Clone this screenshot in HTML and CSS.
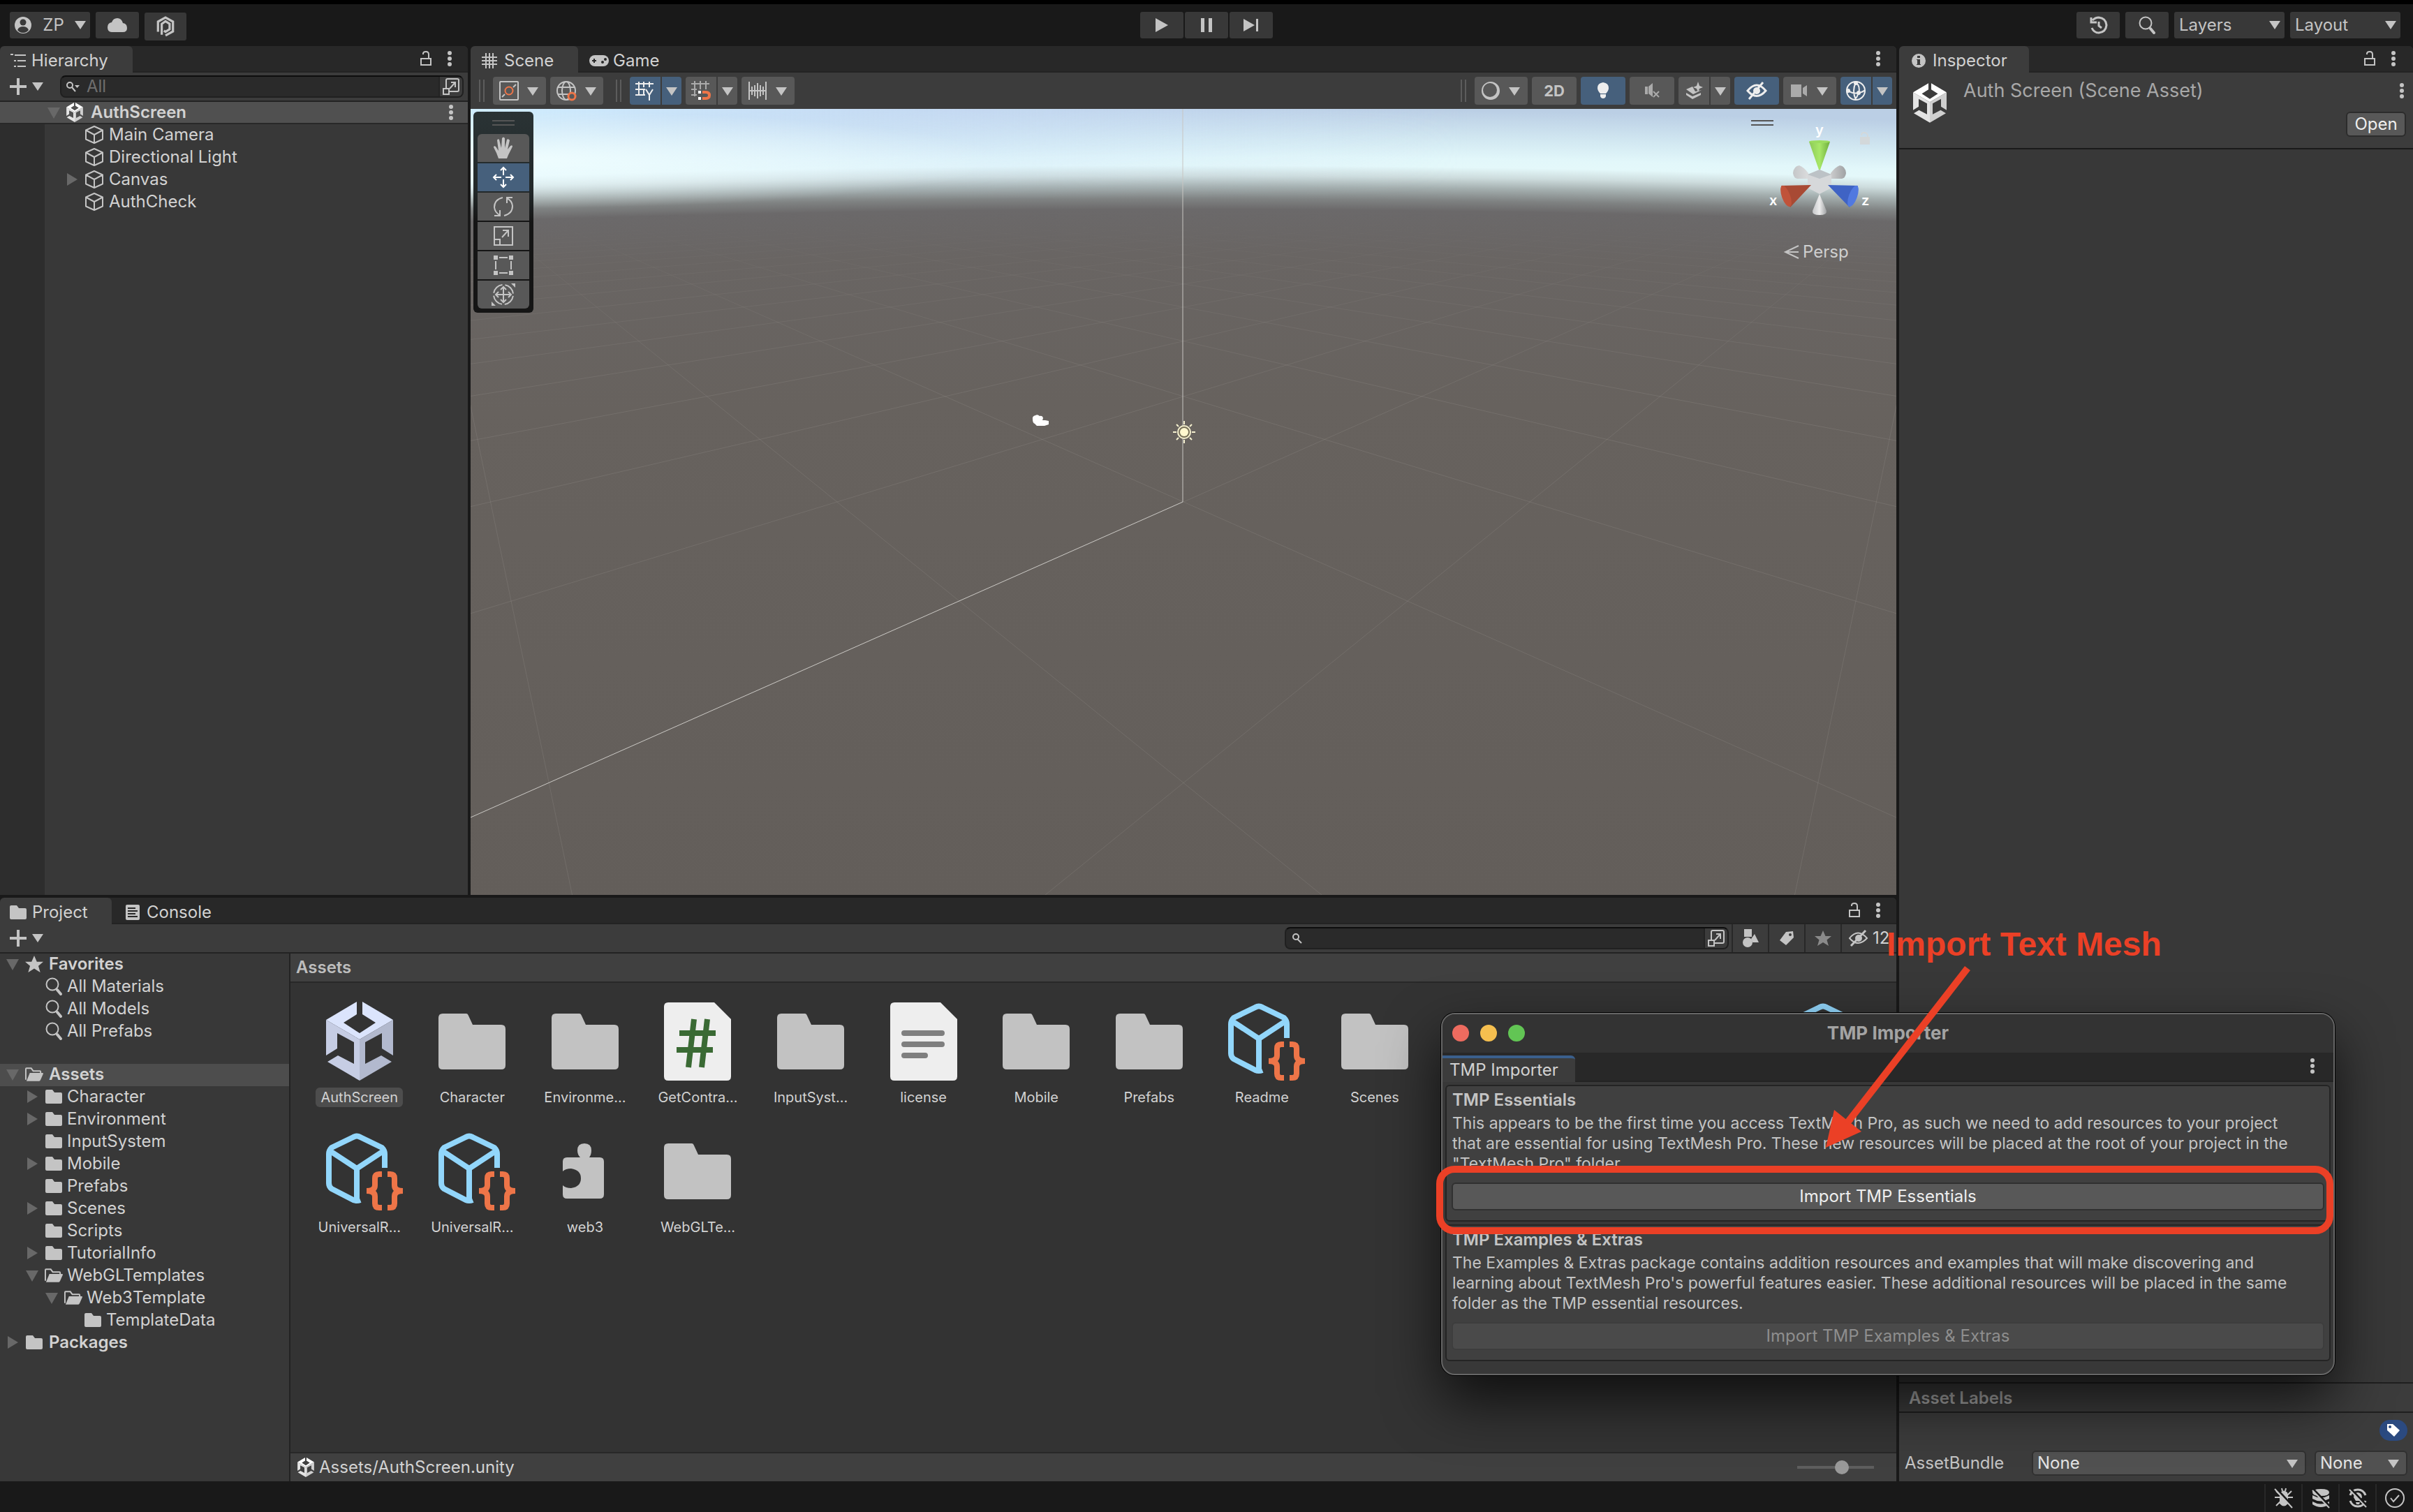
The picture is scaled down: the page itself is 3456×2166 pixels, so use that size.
FILE: index.html
```html
<!DOCTYPE html>
<html lang="en">
<head>
<meta charset="utf-8">
<title>AuthScreen - Unity Editor</title>
<link rel="stylesheet" href="styles.css">
</head>
<body>
<svg class="sprite" aria-hidden="true">
  <symbol id="i-down" viewBox="0 0 16 14"><path d="M0 1h16L8 13z" fill="currentColor"/></symbol>
  <symbol id="i-open" viewBox="0 0 24 24"><path d="M3 5h18L12 21z" fill="#686868"/></symbol>
  <symbol id="i-closed" viewBox="0 0 24 24"><path d="M5 3v18l15-9z" fill="#686868"/></symbol>
  <symbol id="i-dots" viewBox="0 0 8 24"><g fill="currentColor"><circle cx="4" cy="4" r="3"/><circle cx="4" cy="12" r="3"/><circle cx="4" cy="20" r="3"/></g></symbol>
  <symbol id="i-lock" viewBox="0 0 20 24"><path d="M3 12h14v9H3zM6 6V5q0-3 4-3t4 4v6" fill="none" stroke="currentColor" stroke-width="2"/></symbol>
  <symbol id="i-plus" viewBox="0 0 24 24"><path d="M10 0h4v10h10v4H14v10h-4V14H0v-4h10z" fill="currentColor"/></symbol>
  <symbol id="i-search" viewBox="0 0 26 26"><circle cx="11" cy="10" r="8.500" fill="none" stroke="currentColor" stroke-width="2"/><path d="M18 18l5 6" stroke="currentColor" stroke-width="4" stroke-linecap="round"/></symbol>
  <symbol id="i-searchmini" viewBox="0 0 20 16"><circle cx="5" cy="6" r="4" fill="none" stroke="currentColor" stroke-width="2"/><path d="M8 9l5 6" stroke="currentColor" stroke-width="2"/><path d="M12 6h7l-3.500 4z" fill="currentColor"/></symbol>
  <symbol id="i-searchplain" viewBox="0 0 20 16"><circle cx="7" cy="6" r="4" fill="none" stroke="currentColor" stroke-width="2"/><path d="M9 9l6 6" stroke="currentColor" stroke-width="2"/></symbol>
  <symbol id="i-popout" viewBox="0 0 26 26"><g fill="none" stroke="currentColor" stroke-width="2"><path d="M6 15V4q0-2 2-2h14q2 0 2 2v14q0 2-2 2H11M2 16h8v8H2zM11 16l8-9M13 7h6v7"/></g></symbol>
  <symbol id="i-unity" viewBox="0 0 96 113"><path d="M44 0 0 26l48 28 48-28L52 0v18l19 12-23 15-23-15 19-12z" fill="var(--ua)"/><path d="M0 26v51l16-10V45l24 13v31L17 77 2 86l46 27V54z" fill="var(--ub)"/><path d="M96 26v51L80 67V45L56 58v31l23-12 15 9-46 27V54z" fill="var(--uc)"/></symbol>
  <symbol id="i-cube" viewBox="0 0 28 28"><path d="M14 2l12 5.500v13L14 26 2 20.500v-13zM2 7.500 14 14l12-6.500M14 14v12" fill="none" stroke="currentColor" stroke-width="2" stroke-linejoin="round"/></symbol>
  <symbol id="i-folder" viewBox="0 0 24 20"><path d="M2 0h8l3 4h9q2 0 2 2v12q0 2-2 2H2q-2 0-2-2V2q0-2 2-2z" fill="currentColor"/></symbol>
  <symbol id="i-folderopen" viewBox="0 0 27 20"><path d="M1 18V2q0-1 1-1h7l3 4h10q1 0 1 1v3" fill="none" stroke="currentColor" stroke-width="2"/><path d="M7 8h19q1 0 1 1l-4 9q-1 2-2 2H2z" fill="currentColor"/></symbol>
  <symbol id="i-star" viewBox="0 0 24 22"><path d="M12 0l3.500 8H24l-6.500 5.500L20 22l-8-5-8 5 2.500-8.500L0 8h8.500z" fill="currentColor"/></symbol>
  <symbol id="i-pop" viewBox="0 0 26 28"><g fill="none" stroke="currentColor" stroke-width="3"><path d="M8 25V10.500l5-3.500 5.500 3.500v7L13 21l-2-1.500"/><path d="M3 21V7.500L13 2l10 5.500v13L13 26"/></g></symbol>
  <symbol id="b-folder" viewBox="0 0 128 128"><path d="M22 24h34q2 0 3 3l6 13h41q6 0 6 6v52q0 6-6 6H22q-6 0-6-6V30q0-6 6-6z" fill="#c2c2c2"/></symbol>
  <symbol id="b-unity" viewBox="0 0 128 128"><use href="#i-unity" x="16" y="7" width="96" height="113"/></symbol>
  <symbol id="b-script" viewBox="0 0 128 128"><path d="M22 8h66l24 24v82q0 6-6 6H22q-6 0-6-6V14q0-6 6-6z" fill="#eee"/><path d="M59 32l-8 69M78 32l-8 69M38 52h52M34 76h52" fill="none" stroke="#3a6a34" stroke-width="8"/></symbol>
  <symbol id="b-text" viewBox="0 0 128 128"><path d="M22 8h66l24 24v82q0 6-6 6H22q-6 0-6-6V14q0-6 6-6z" fill="#eee"/><path d="M36 52h54M36 68h54M36 84h30" stroke="#7f7f7f" stroke-width="8" stroke-linecap="round"/></symbol>
  <symbol id="b-object" viewBox="0 0 128 128"><path d="M100 59V39q0-5-4-9L65 15q-5-3-10 0L24 30q-4 4-4 9v42q0 5 4 8l31 16q5 2 10 0M22 35l38 25 38-25M60 60v46" fill="none" stroke="#92d6fb" stroke-width="8" stroke-linejoin="round"/><path d="M96 68h-4q-6 0-6 6v10q0 8-12 8q12 0 12 8v10q0 6 6 6h4M104 68h4q6 0 6 6v10q0 8 12 8q-12 0-12 8v10q0 6-6 6h-4" fill="none" stroke="#ee7548" stroke-width="8"/></symbol>
  <symbol id="b-puzzle" viewBox="0 0 128 128"><path d="M38 44h19q-4-4-4-10 0-10 10-10t10 10q0 6-3 10h15q6 0 6 6v47q0 6-6 6H38q-6 0-6-6V84q4 4 12 4 14-2 14-14T44 60q-8 0-12 4V50q0-6 6-6z" fill="#c2c2c2"/></symbol>
</svg>

<header class="topbar">
  <div class="topbar-group">
    <button class="tbtn account"><svg width="26" height="26" viewBox="0 0 26 26"><circle cx="13" cy="13" r="12" fill="currentColor"/><circle cx="13" cy="9" r="4.500" fill="#383838"/><path d="M5 20q2-5 8-5t8 5q-3 4-8 4t-8-4z" fill="#383838"/></svg><span>ZP</span><svg class="arrow"><use href="#i-down"/></svg></button>
    <button class="tbtn" aria-label="Cloud"><svg width="30" height="22" viewBox="0 0 30 22"><path d="M7 21q-6 0-6-7 0-6 6-7Q9 1 15 1t8 7q6 1 6 7t-6 6z" fill="currentColor"/></svg></button>
    <button class="tbtn plug" aria-label="Package"><svg width="28" height="30"><use href="#i-pop"/></svg></button>
  </div>
  <div class="playbar">
    <button class="tbtn" aria-label="Play"><svg width="20" height="22" viewBox="0 0 20 22"><path d="M1 1l18 10L1 21z" fill="currentColor"/></svg></button>
    <button class="tbtn" aria-label="Pause"><svg width="18" height="20" viewBox="0 0 18 20"><path d="M1 0h5v20H1zM12 0h5v20h-5z" fill="currentColor"/></svg></button>
    <button class="tbtn" aria-label="Step"><svg width="24" height="20" viewBox="0 0 24 20"><path d="M1 1l16 9-16 9zM19 1h3v18h-3z" fill="currentColor"/></svg></button>
  </div>
  <div class="topbar-group end">
    <button class="tbtn" aria-label="History"><svg width="26" height="26" viewBox="0 0 26 26"><path d="M5 6q4-4 9-4 10 1 11 11-1 10-11 11-7 0-10-7M3 2v7h8M14 8v6l4 3" fill="none" stroke="currentColor" stroke-width="3"/></svg></button>
    <button class="tbtn" aria-label="Search"><svg width="26" height="26"><use href="#i-search"/></svg></button>
    <label class="pick"><select aria-label="Layers"><option>Layers</option></select><svg class="arrow"><use href="#i-down"/></svg></label>
    <label class="pick"><select aria-label="Layout"><option>Layout</option></select><svg class="arrow"><use href="#i-down"/></svg></label>
  </div>
</header>

<main class="workspace">
  <div class="docks">
    <div class="upper">
      <section class="panel hierarchy">
        <div class="tabs">
          <button class="tab on hier-tab"><svg width="22" height="22" viewBox="0 0 22 22"><g fill="none" stroke="currentColor" stroke-width="2"><path d="M0 2h4M6 3h16M5 11h3M10 11h12M5 19h3M10 19h12"/></g></svg>Hierarchy</button>
          <span class="tab-tools"><svg width="20" height="24"><use href="#i-lock"/></svg><svg width="8" height="24"><use href="#i-dots"/></svg></span>
        </div>
        <div class="bar">
          <button class="add" aria-label="Create"><svg width="24" height="24"><use href="#i-plus"/></svg><svg class="arrow"><use href="#i-down"/></svg></button>
          <label class="search"><svg width="20" height="16"><use href="#i-searchmini"/></svg><input type="text" placeholder="All" aria-label="Search hierarchy"><span class="pop"><svg width="26" height="26"><use href="#i-popout"/></svg></span></label>
        </div>
        <div class="scene-row"><svg class="fold"><use href="#i-open"/></svg><svg class="ic mono" width="24" height="28"><use href="#i-unity"/></svg><b>AuthScreen</b><svg class="row-dots" width="8" height="24"><use href="#i-dots"/></svg></div>
        <ul class="objects">
          <li><span class="fold"></span><svg width="28" height="28"><use href="#i-cube"/></svg>Main Camera</li>
          <li><span class="fold"></span><svg width="28" height="28"><use href="#i-cube"/></svg>Directional Light</li>
          <li><svg class="fold"><use href="#i-closed"/></svg><svg width="28" height="28"><use href="#i-cube"/></svg>Canvas</li>
          <li><span class="fold"></span><svg width="28" height="28"><use href="#i-cube"/></svg>AuthCheck</li>
        </ul>
      </section>

      <section class="panel scene">
        <div class="tabs">
          <button class="tab on scene-tab"><svg width="22" height="22" viewBox="0 0 22 22"><path d="M6 0v22M11 0v22M16 0v22M0 6h22M0 11h22M0 16h22" stroke="currentColor" stroke-width="2"/></svg>Scene</button>
          <button class="tab game-tab"><svg width="28" height="16" viewBox="0 0 28 16"><rect width="28" height="16" rx="8" fill="currentColor"/><path d="M4 8h6M7 5v6" stroke="#282828" stroke-width="2"/><circle cx="19" cy="10" r="2" fill="#282828"/><circle cx="23" cy="6" r="2" fill="#282828"/></svg>Game</button>
          <span class="tab-tools"><svg width="8" height="24"><use href="#i-dots"/></svg></span>
        </div>
        <div class="scene-bar">
          <i class="grip"></i>
          <button class="sb wide" aria-label="Pivot"><svg width="28" height="28" viewBox="0 0 28 28"><rect x="1" y="1" width="26" height="26" rx="1" fill="none" stroke="currentColor" stroke-width="2"/><path d="M4 23l4-4M20 9l4-4" stroke="currentColor" stroke-width="2"/><circle cx="14" cy="14" r="5.500" fill="none" stroke="#ee7548" stroke-width="2"/></svg><svg class="arrow"><use href="#i-down"/></svg></button>
          <button class="sb wide" aria-label="Global"><svg width="30" height="30" viewBox="0 0 30 30"><g fill="none" stroke="currentColor" stroke-width="2"><circle cx="15" cy="15" r="13"/><ellipse cx="15" cy="15" rx="6" ry="13"/><path d="M3 10h24M3 20h24"/></g><circle cx="23" cy="23" r="5" fill="#585858" stroke="#ee7548" stroke-width="3"/></svg><svg class="arrow"><use href="#i-down"/></svg></button>
          <i class="grip second"></i>
          <span class="split"><button class="sb blue" aria-label="Grid axis"><svg width="28" height="28" viewBox="0 0 28 28"><path d="M5 1v20M12 1v8M12 12v9M20 1v8M0 4h26M0 12h14M0 20h14M15 12l5 8 5-8M20 20v8" fill="none" stroke="currentColor" stroke-width="2"/></svg></button><button class="sb blue thin" aria-label="Grid options"><svg class="arrow"><use href="#i-down"/></svg></button></span>
          <span class="split"><button class="sb" aria-label="Snap"><svg width="28" height="28" viewBox="0 0 28 28"><path d="M5 0v22M13 0v12M21 0v12M0 4h26M0 12h8M0 20h8" fill="none" stroke="#aaa" stroke-width="2"/><path d="M16 16h5q5 0 5 4.500T21 25h-5" fill="none" stroke="#ee7548" stroke-width="4"/><path d="M10 14h4v4h-4zM10 23h4v4h-4z" fill="#fff"/></svg></button><button class="sb thin" aria-label="Snap options"><svg class="arrow"><use href="#i-down"/></svg></button></span>
          <button class="sb wide" aria-label="Increment"><svg width="28" height="28" viewBox="0 0 28 28"><path d="M2 1v26M26 1v26M6 8v12M10 6v16M14 3v22M18 6v16M22 8v12M2 14h24" stroke="currentColor" stroke-width="2"/></svg><svg class="arrow"><use href="#i-down"/></svg></button>
          <span class="spring"></span>
          <i class="grip"></i>
          <button class="sb wide" aria-label="Draw mode"><svg width="28" height="28" viewBox="0 0 28 28"><path d="M14 1a13 13 0 1 1 0 26a13 13 0 1 1 0-26zm-1 2a10 10 0 1 0 0 20a10 10 0 1 0 0-20z" fill="currentColor" fill-rule="evenodd"/></svg><svg class="arrow"><use href="#i-down"/></svg></button>
          <button class="sb mid twod">2D</button>
          <button class="sb mid blue" aria-label="Lighting"><svg width="18" height="26" viewBox="0 0 18 26"><path d="M9 1q8 1 8 8 0 4-4 8H5q-4-4-4-8 0-7 8-8zM5 18h8v3q-1 3-4 3t-4-3z" fill="currentColor"/></svg></button>
          <button class="sb mid" aria-label="Audio"><svg width="24" height="24" viewBox="0 0 24 24"><path d="M2 6h4v11H2zM7 6l6-5v20l-6-5z" fill="#aaa"/><path d="M14 13l8 8M22 13l-8 8" stroke="#aaa" stroke-width="2"/></svg></button>
          <span class="split"><button class="sb" aria-label="Effects"><svg width="28" height="28" viewBox="0 0 28 28"><path d="M20 1l2 6 5 2-5 2-2 5-2-5-5-2 5-2zM3 12l9-4 4 7 9-2-12 6zM3 17l9 5 12-5v3l-12 6-9-6z" fill="currentColor"/></svg></button><button class="sb thin" aria-label="Effects options"><svg class="arrow"><use href="#i-down"/></svg></button></span>
          <button class="sb mid blue" aria-label="Hidden objects"><svg width="30" height="26" viewBox="0 0 30 26"><path d="M2 13q13-16 26 0-13 15-26 0z" fill="none" stroke="currentColor" stroke-width="3"/><circle cx="15" cy="13" r="5" fill="currentColor"/><path d="M4 25L24 1" stroke="currentColor" stroke-width="3"/></svg></button>
          <button class="sb wide" aria-label="Camera"><svg width="26" height="20" viewBox="0 0 26 20"><path d="M1 1h15v18H1zM18 6l6-4v16l-6-4z" fill="#aaa"/></svg><svg class="arrow"><use href="#i-down"/></svg></button>
          <span class="split"><button class="sb blue" aria-label="Gizmos"><svg width="30" height="30" viewBox="0 0 30 30"><g fill="none" stroke="currentColor" stroke-width="2"><circle cx="15" cy="15" r="13"/><path d="M15 3q-6 12 0 25M15 3q7 6 4 15-2 6-5 9M3 14q7 6 16 4 6-1 9-4"/></g><g fill="currentColor"><circle cx="15" cy="4" r="3"/><circle cx="4" cy="15" r="3"/><circle cx="19" cy="18" r="3"/></g></svg></button><button class="sb blue thin" aria-label="Gizmo options"><svg class="arrow"><use href="#i-down"/></svg></button></span>
        </div>
        <div class="viewport">
          <svg class="world" viewBox="0 0 2042 1126" preserveAspectRatio="none">
            <defs>
              <radialGradient id="sky" gradientUnits="userSpaceOnUse" cx="1021" cy="30000" r="30000">
                <stop offset="0.9620" stop-color="#635e5a"/>
                <stop offset="0.9860" stop-color="#67625e"/>
                <stop offset="0.9930" stop-color="#696563"/>
                <stop offset="0.9952" stop-color="#6b696a"/>
                <stop offset="0.9957" stop-color="#7f8282"/>
                <stop offset="0.9963" stop-color="#a5b0b0"/>
                <stop offset="0.9968" stop-color="#cddcdd"/>
                <stop offset="0.9973" stop-color="#e4f8fa"/>
                <stop offset="0.9977" stop-color="#e2f7fa"/>
                <stop offset="0.9986" stop-color="#d3e9f2"/>
                <stop offset="1" stop-color="#bbcfe5"/>
              </radialGradient>
              <radialGradient id="glow" gradientUnits="userSpaceOnUse" cx="60" cy="65" r="700" gradientTransform="matrix(1 0 0 .1 0 66)">
                <stop offset="0" stop-color="#f2ffff" stop-opacity=".9"/><stop offset="1" stop-color="#f2ffff" stop-opacity="0"/>
              </radialGradient>
              <linearGradient id="tint" x1="0" x2="1"><stop offset="0" stop-color="#d0eeff"/><stop offset=".35" stop-color="#cbe0fa" stop-opacity=".6"/><stop offset=".7" stop-color="#cbe0fa" stop-opacity="0"/></linearGradient>
              <linearGradient id="fadev" x1="0" x2="0" y1="0" y2="1"><stop offset="0" stop-color="#fff"/><stop offset="1" stop-color="#000"/></linearGradient>
              <mask id="fade"><rect width="2042" height="130" fill="url(#fadev)"/></mask>
              <linearGradient id="haze" gradientUnits="userSpaceOnUse" x1="0" x2="0" y1="150" y2="420"><stop offset="0" stop-color="#000"/><stop offset=".4" stop-color="#888"/><stop offset="1" stop-color="#fff"/></linearGradient>
              <mask id="gridfade" maskUnits="userSpaceOnUse" x="0" y="0" width="2042" height="1126"><rect width="2042" height="1126" fill="url(#haze)"/></mask>
            </defs>
            <rect width="2042" height="1126" fill="url(#sky)"/>
            <rect width="2042" height="130" fill="url(#tint)" mask="url(#fade)"/>
            <rect width="900" height="150" fill="url(#glow)"/>
            <g mask="url(#gridfade)"><g id="grid"></g></g>
            <g fill="none" stroke="#c8c6c2" stroke-width="1"><path d="M1020 0v563L0 1015"/></g>
          </svg>
          <svg class="camera-mark" width="26" height="20" viewBox="0 0 26 20"><path d="M2 8q-1-5 4-6 3-2 6 1 4-1 5 3l-1 3h4l5 1v5l-6 2H8l-3-3q-3-1-3-6z" fill="#fff"/></svg>
          <svg class="sun-mark" width="34" height="34" viewBox="0 0 34 34"><g stroke="#f5f0cf" stroke-width="2"><path d="M17 1v5M17 28v5M1 17h5M28 17h5M6 6l3 3M25 25l3 3M6 28l3-3M25 9l3-3"/><circle cx="17" cy="17" r="9" fill="#777058"/></g><circle cx="17" cy="17" r="6" fill="#fff8cf"/></svg>
          <div class="tools">
            <i class="hgrip"></i>
            <button aria-label="View tool"><svg width="30" height="32" viewBox="0 0 30 32"><path d="M8 31L5 23 1 15q0-3 3-1l4 6L6 5q1-3 3-1l3 12 1-14q2-3 4 0l0 14 3-12q2-2 4 1l-3 13 4-5q3-2 3 1l-6 12-2 5z" fill="currentColor"/></svg></button>
            <button class="blue" aria-label="Move tool"><svg width="32" height="32" viewBox="0 0 32 32"><path d="M16 2v11M16 19v11M2 16h11M19 16h11M12 6l4-4 4 4M12 26l4 4 4-4M6 12l-4 4 4 4M26 12l4 4-4 4" fill="none" stroke="#fff" stroke-width="2"/></svg></button>
            <button aria-label="Rotate tool"><svg width="32" height="32" viewBox="0 0 32 32"><path d="M15 3Q3 6 3 17q1 8 8 11M3 29h8v-8M17 29q12-3 12-14-1-8-8-11M29 3h-8v8" fill="none" stroke="currentColor" stroke-width="2"/></svg></button>
            <button aria-label="Scale tool"><svg width="32" height="32" viewBox="0 0 32 32"><path d="M3 3h26v26H3zM3 21h8v8M14 18l9-10M15 8h8v9" fill="none" stroke="currentColor" stroke-width="2"/></svg></button>
            <button aria-label="Rect tool"><svg width="32" height="32" viewBox="0 0 32 32"><path d="M10 5h12M10 27h12M5 10v12M27 10v12" stroke="currentColor" stroke-width="2"/><path d="M2 2h6v6H2zM24 2h6v6h-6zM2 24h6v6H2zM24 24h6v6h-6z" fill="currentColor"/></svg></button>
            <button aria-label="Transform tool"><svg width="34" height="32" viewBox="0 0 34 32"><path d="M17 5v22M6 16h22M13 9l4-4 4 4M13 23l4 4 4-4M10 12l-4 4 4 4M24 12l4 4-4 4" fill="none" stroke="currentColor" stroke-width="2"/><circle cx="17" cy="16" r="14" fill="none" stroke="currentColor" stroke-width="2" stroke-dasharray="18 4" stroke-dashoffset="-2"/><path d="M28 0h6v6zM0 26v6h6z" fill="currentColor"/></svg></button>
          </div>
          <div class="orient">
            <i class="hgrip"></i>
            <svg width="150" height="120" viewBox="0 0 150 120">
              <defs><linearGradient id="gw" x1="0" x2="1"><stop offset="0" stop-color="#c4c6c8"/><stop offset=".5" stop-color="#ececec"/><stop offset="1" stop-color="#9fa1a3"/></linearGradient><linearGradient id="gg" x1="0" x2="1"><stop offset="0" stop-color="#8cc957"/><stop offset=".5" stop-color="#a8e868"/><stop offset="1" stop-color="#6fae3e"/></linearGradient></defs>
              <path d="M57 47q-7-9-13-11-8 1-9 11 1 7 6 8h16zM89 47q7-9 13-11 8 1 9 11-1 7-6 8H89z" fill="url(#gw)"/>
              <path d="M56 49l17-7 17 7v19l-17 9-17-9z" fill="#d6d8da"/><path d="M56 49l17-7 17 7-17 6z" fill="#bcc2c6"/>
              <path d="M58 2h30L74 42h-2z" fill="url(#gg)"/><ellipse cx="73" cy="2" rx="15" ry="2" fill="#9bdc5e"/>
              <path d="M18 65l43-1-30 32z" fill="#a84a34"/><ellipse cx="25" cy="80" rx="6" ry="16" transform="rotate(-20 25 80)" fill="#c0533a"/>
              <path d="M85 64l43 1-12 31z" fill="#3f63c4"/><ellipse cx="121" cy="80" rx="6" ry="16" transform="rotate(20 121 80)" fill="#5179e0"/>
              <path d="M73 77l10 24q1 6-10 6t-10-6z" fill="url(#gw)"/>
              <path d="M131-5h14V6h-14z" fill="#d3d8da"/><path d="M133-7q0-4 4-4t5 4v3" fill="none" stroke="#d3d8da" stroke-width="2"/>
            </svg>
            <span class="ax ay">y</span><span class="ax axx">x</span><span class="ax az">z</span>
            <button class="persp"><svg width="20" height="20" viewBox="0 0 20 20"><path d="M20 1L1 10l19 9M2 10h18" fill="none" stroke="currentColor" stroke-width="2"/></svg>Persp</button>
          </div>
        </div>
      </section>
    </div>

    <section class="panel project">
      <div class="tabs">
        <button class="tab on proj-tab"><svg width="24" height="20"><use href="#i-folder"/></svg>Project</button>
        <button class="tab cons-tab"><svg width="20" height="22" viewBox="0 0 20 22"><rect width="20" height="22" rx="2" fill="currentColor"/><path d="M3 5h11M3 9h14M3 13h11M3 17h14" stroke="#282828" stroke-width="2"/></svg>Console</button>
        <span class="tab-tools"><svg width="20" height="24"><use href="#i-lock"/></svg><svg width="8" height="24"><use href="#i-dots"/></svg></span>
      </div>
      <div class="bar">
        <button class="add" aria-label="Create asset"><svg width="24" height="24"><use href="#i-plus"/></svg><svg class="arrow"><use href="#i-down"/></svg></button>
        <span class="spring"></span>
        <label class="search assets-search"><svg width="20" height="16"><use href="#i-searchplain"/></svg><input type="text" aria-label="Search assets"><span class="pop"><svg width="26" height="26"><use href="#i-popout"/></svg></span></label>
        <button class="pbtn" aria-label="Type filter"><svg width="26" height="28" viewBox="0 0 26 28"><path d="M4 1h11v11H4zM19 8l6 12h-9l-2-5z" fill="currentColor"/><circle cx="9" cy="20" r="7" fill="currentColor"/></svg></button>
        <button class="pbtn" aria-label="Label filter"><svg width="22" height="22" viewBox="0 0 22 22"><path d="M10 2l10-1 1 9-11 11-9-7z" fill="currentColor"/><circle cx="16" cy="6" r="2" fill="#3c3c3c"/></svg></button>
        <button class="pbtn dim" aria-label="Favorite filter"><svg width="24" height="22"><use href="#i-star"/></svg></button>
        <button class="pbtn hid"><svg width="28" height="24" viewBox="0 0 28 24"><path d="M1 12q12-15 25 0-13 14-25 0z" fill="none" stroke="currentColor" stroke-width="2"/><circle cx="14" cy="12" r="5" fill="currentColor"/><path d="M3 23L24 1" stroke="currentColor" stroke-width="3"/></svg>12</button>
      </div>
      <div class="browser">
        <ul class="tree">
          <li class="l0"><svg class="fold"><use href="#i-open"/></svg><svg class="ic" width="26" height="24"><use href="#i-star"/></svg><b>Favorites</b></li>
          <li class="l1"><span class="fold"></span><svg class="ic" width="26" height="26"><use href="#i-search"/></svg>All Materials</li>
          <li class="l1"><span class="fold"></span><svg class="ic" width="26" height="26"><use href="#i-search"/></svg>All Models</li>
          <li class="l1"><span class="fold"></span><svg class="ic" width="26" height="26"><use href="#i-search"/></svg>All Prefabs</li>
          <li class="l0 picked"><svg class="fold"><use href="#i-open"/></svg><svg class="ic" width="26" height="20"><use href="#i-folderopen"/></svg><b>Assets</b></li>
          <li class="l1"><svg class="fold"><use href="#i-closed"/></svg><svg class="ic" width="26" height="20"><use href="#i-folder"/></svg>Character</li>
          <li class="l1"><svg class="fold"><use href="#i-closed"/></svg><svg class="ic" width="26" height="20"><use href="#i-folder"/></svg>Environment</li>
          <li class="l1"><span class="fold"></span><svg class="ic" width="26" height="20"><use href="#i-folder"/></svg>InputSystem</li>
          <li class="l1"><svg class="fold"><use href="#i-closed"/></svg><svg class="ic" width="26" height="20"><use href="#i-folder"/></svg>Mobile</li>
          <li class="l1"><span class="fold"></span><svg class="ic" width="26" height="20"><use href="#i-folder"/></svg>Prefabs</li>
          <li class="l1"><svg class="fold"><use href="#i-closed"/></svg><svg class="ic" width="26" height="20"><use href="#i-folder"/></svg>Scenes</li>
          <li class="l1"><span class="fold"></span><svg class="ic" width="26" height="20"><use href="#i-folder"/></svg>Scripts</li>
          <li class="l1"><svg class="fold"><use href="#i-closed"/></svg><svg class="ic" width="26" height="20"><use href="#i-folder"/></svg>TutorialInfo</li>
          <li class="l1"><svg class="fold"><use href="#i-open"/></svg><svg class="ic" width="26" height="20"><use href="#i-folderopen"/></svg>WebGLTemplates</li>
          <li class="l2"><svg class="fold"><use href="#i-open"/></svg><svg class="ic" width="26" height="20"><use href="#i-folderopen"/></svg>Web3Template</li>
          <li class="l3"><span class="fold"></span><svg class="ic" width="26" height="20"><use href="#i-folder"/></svg>TemplateData</li>
          <li class="l0"><svg class="fold"><use href="#i-closed"/></svg><svg class="ic" width="26" height="20"><use href="#i-folder"/></svg><b>Packages</b></li>
        </ul>
        <div class="content">
          <h2 class="crumb">Assets</h2>
          <ul class="assets">
            <li class="chosen"><svg><use href="#b-unity"/></svg><span>AuthScreen</span></li>
            <li><svg><use href="#b-folder"/></svg><span>Character</span></li>
            <li><svg><use href="#b-folder"/></svg><span>Environme...</span></li>
            <li><svg><use href="#b-script"/></svg><span>GetContra...</span></li>
            <li><svg><use href="#b-folder"/></svg><span>InputSyst...</span></li>
            <li><svg><use href="#b-text"/></svg><span>license</span></li>
            <li><svg><use href="#b-folder"/></svg><span>Mobile</span></li>
            <li><svg><use href="#b-folder"/></svg><span>Prefabs</span></li>
            <li><svg><use href="#b-object"/></svg><span>Readme</span></li>
            <li><svg><use href="#b-folder"/></svg><span>Scenes</span></li>
            <li class="row-end"><svg><use href="#b-object"/></svg></li>
            <li><svg><use href="#b-object"/></svg><span>UniversalR...</span></li>
            <li><svg><use href="#b-object"/></svg><span>UniversalR...</span></li>
            <li><svg><use href="#b-puzzle"/></svg><span>web3</span></li>
            <li><svg><use href="#b-folder"/></svg><span>WebGLTe...</span></li>
          </ul>
          <div class="path"><svg class="mono" width="24" height="28"><use href="#i-unity"/></svg><span>Assets/AuthScreen.unity</span><input type="range" min="0" max="100" value="60" aria-label="Icon size"></div>
        </div>
      </div>
    </section>
  </div>

  <aside class="panel inspector">
    <div class="tabs">
      <button class="tab on insp-tab"><svg width="20" height="20" viewBox="0 0 20 20"><circle cx="10" cy="10" r="10" fill="currentColor"/><path d="M8 3h4v3H8zM7 8h5v7h1v1H7v-1h1V9H7z" fill="#3c3c3c"/></svg>Inspector</button>
      <span class="tab-tools"><svg width="20" height="24"><use href="#i-lock"/></svg><svg width="8" height="24"><use href="#i-dots"/></svg></span>
    </div>
    <div class="insp-head">
      <svg class="mono" width="48" height="57"><use href="#i-unity"/></svg>
      <h1>Auth Screen (Scene Asset)</h1>
      <div class="insp-side"><svg width="8" height="24"><use href="#i-dots"/></svg><button class="open">Open</button></div>
    </div>
    <div class="spring"></div>
    <h2 class="labels">Asset Labels</h2>
    <div class="bundle">
      <button class="tag" aria-label="Edit labels"><svg width="22" height="22" viewBox="0 0 22 22"><path d="M2 2h8l10 9-8 9L2 11z" fill="#fff"/><circle cx="6" cy="6" r="2" fill="#2b4a80"/></svg></button>
      <div class="fields">
        <label for="bundle">AssetBundle</label>
        <span class="drop grow"><select id="bundle"><option>None</option></select><svg class="arrow"><use href="#i-down"/></svg></span>
        <span class="drop variant"><select aria-label="Variant"><option>None</option></select><svg class="arrow"><use href="#i-down"/></svg></span>
      </div>
    </div>
  </aside>
</main>

<footer class="status">
  <span><svg width="28" height="28" viewBox="0 0 28 28"><path d="M9 6q5-5 10 0l1 4v12q-6 7-12 0V10z" fill="currentColor"/><path d="M1 13h26M3 4l6 6M25 4l-6 6M3 25l6-6M25 25l-6-6M11 0l1 4M17 0l-1 4" stroke="currentColor" stroke-width="2"/><path d="M3 0l25 27" stroke="#191919" stroke-width="3"/><path d="M1 1l25 27" stroke="currentColor" stroke-width="2"/></svg></span>
  <span><svg width="28" height="28" viewBox="0 0 28 28"><path d="M2 6q0-5 12-5t12 5-12 5T2 6zM2 10q12 7 24 0v5q-12 7-24 0zM2 19q12 7 24 0v4q-12 8-24 0z" fill="currentColor"/><path d="M4 2l24 25" stroke="#191919" stroke-width="3"/><path d="M2 3l24 25" stroke="currentColor" stroke-width="2"/></svg></span>
  <span><svg width="28" height="28" viewBox="0 0 28 28"><path d="M3 10q3-8 11-8t11 8M3 18q3 8 11 8t11-8" fill="none" stroke="currentColor" stroke-width="3"/><path d="M14 6q6 1 6 7l-3 5h-6l-3-5q0-6 6-7zM11 20h6l-1 3h-4z" fill="currentColor"/><path d="M4 1l24 25" stroke="#191919" stroke-width="3"/><path d="M2 2l24 25" stroke="currentColor" stroke-width="2"/></svg></span>
  <span><svg width="28" height="28" viewBox="0 0 28 28"><circle cx="14" cy="14" r="13" fill="none" stroke="currentColor" stroke-width="2"/><path d="M8 14l4 5 8-9" fill="none" stroke="currentColor" stroke-width="2"/></svg></span>
</footer>

<div class="dialog" role="dialog" aria-label="TMP Importer">
  <div class="dialog-frame">
    <div class="titlebar"><span class="lights"><i class="red"></i><i class="amber"></i><i class="green"></i></span><strong>TMP Importer</strong><span></span></div>
    <div class="dialog-tabs"><button class="dtab">TMP Importer</button><svg width="8" height="24"><use href="#i-dots"/></svg></div>
    <div class="dialog-body">
      <section class="box">
        <h3>TMP Essentials</h3>
        <p>This appears to be the first time you access TextMesh Pro, as such we need to add resources to your project<br>that are essential for using TextMesh Pro. These new resources will be placed at the root of your project in the<br>"TextMesh Pro" folder.</p>
        <button>Import TMP Essentials</button>
      </section>
      <section class="box">
        <h3>TMP Examples &amp; Extras</h3>
        <p>The Examples &amp; Extras package contains addition resources and examples that will make discovering and<br>learning about TextMesh Pro's powerful features easier. These additional resources will be placed in the same<br>folder as the TMP essential resources.</p>
        <button disabled>Import TMP Examples &amp; Extras</button>
      </section>
    </div>
  </div>
  <div class="highlight"></div>
  <div class="note">Import Text Mesh</div>
  <svg class="pointer" width="220" height="270" viewBox="0 0 220 270"><path d="M215 7L40 232" stroke="#eb4026" stroke-width="10"/><path d="M12 264l12-54 39 31z" fill="#eb4026"/></svg>
</div>
<script src="scene.js"></script>
</body>
</html>
```
FILE: styles.css
```css
:root {
  --text: #d2d2d2;
  --icon: #c4c4c4;
  --line: #191919;
}
* { box-sizing: border-box; }
body {
  margin: 0;
  height: 100vh;
  display: flex;
  flex-direction: column;
  position: relative;
  overflow: hidden;
  background: var(--line);
  border-top: 6px solid #000;
  color: var(--text);
  font: 24px/32px Inter, "Liberation Sans", sans-serif;
}
button, input, select { font: inherit; color: inherit; border: 0; margin: 0; padding: 0; background: none; }
select { appearance: none; width: 100%; height: 100%; }
ul { list-style: none; margin: 0; padding: 0; }
h1, h2, h3, p { margin: 0; font-size: 24px; }
b, h2, h3 { font-weight: 600; }
svg { display: block; flex: none; color: var(--icon); overflow: visible; }
.sprite { position: absolute; width: 0; height: 0; overflow: hidden; }
.arrow { width: 16px; height: 14px; }
.spring { flex: 1; }
.fold { width: 24px; height: 24px; flex: none; margin-right: 6px; }
.mono { --ua: #fff; --ub: #e4e4e4; --uc: #cfcfcf; }

/* top bar */
.topbar { display: grid; grid-template-columns: 1fr auto 1fr; padding: 11px 14px; height: 60px; }
.topbar-group { display: flex; gap: 8px; }
.end { justify-content: flex-end; padding-right: 4px; }
.tbtn { display: flex; align-items: center; justify-content: center; width: 62px; height: 38px; background: #383838; border-radius: 3px; }
.account { width: 115px; gap: 15px; color: var(--icon); }
.plug { width: 60px; height: 40px; margin-top: 1px; }
.playbar { display: flex; gap: 2px; }
.pick { position: relative; width: 158px; height: 38px; background: #383838; border-radius: 3px; }
.pick select { padding-left: 7px; color: var(--icon); }
.pick .arrow { position: absolute; right: 6px; top: 12px; }

/* docking layout */
.workspace { flex: 1; min-height: 0; display: flex; gap: 4px; }
.docks { flex: 1; min-width: 0; display: grid; grid-template-rows: minmax(0, 1216fr) minmax(0, 836fr); gap: 4px; }
.upper { display: flex; gap: 4px; min-height: 0; }
.panel { display: flex; flex-direction: column; background: #383838; border-radius: 6px 6px 0 0; overflow: hidden; min-height: 0; }
.hierarchy { width: 670px; }
.scene { flex: 1; }
.inspector { width: 736px; }
.tabs { display: flex; height: 38px; background: #282828; border-bottom: 2px solid #232323; flex: none; }
.tab { display: flex; align-items: center; gap: 8px; height: 38px; padding: 4px 16px 0 16px; }
.tab.on { background: #3c3c3c; border-radius: 6px 6px 0 0; }
.hier-tab { width: 190px; padding-left: 15px; }
.scene-tab { width: 154px; gap: 10px; }
.game-tab { gap: 6px; }
.proj-tab { width: 160px; padding-left: 14px; }
.cons-tab { padding-left: 20px; gap: 10px; }
.insp-tab { width: 186px; padding-left: 18px; gap: 10px; }
.tab-tools { display: flex; gap: 20px; margin-left: auto; padding: 6px 22px 0 0; }
.inspector .tab-tools { padding-right: 24px; gap: 20px; }
.bar { display: flex; align-items: center; height: 42px; background: #3c3c3c; border-bottom: 2px solid #232323; padding-left: 14px; flex: none; }
.add { display: flex; align-items: center; gap: 8px; }
.search { display: flex; align-items: center; height: 32px; background: #2a2a2a; border: 2px solid #202020; border-top-color: #0d0d0d; border-radius: 8px; overflow: hidden; padding-left: 7px; }
.hierarchy .search { flex: 1; margin: 0 6px 0 24px; }
.search input { flex: 1; min-width: 0; padding-left: 9px; height: 28px; outline: 0; }
.search input::placeholder { color: #6e6e6e; opacity: 1; }
.pop { width: 34px; height: 28px; background: #3c3c3c; display: flex; justify-content: center; align-items: center; border-left: 2px solid #232323; }
.assets-search { width: 636px; margin-right: 4px; }

/* hierarchy */
.scene-row { display: flex; align-items: center; height: 32px; background: #505050; border-bottom: 2px solid #282828; padding: 0 20px 0 65px; flex: none; }
.scene-row b { margin-left: 11px; }
.row-dots { margin-left: auto; }
.objects { flex: 1; background: linear-gradient(90deg, #2d2d2d 64px, #383838 64px); }
.objects li { display: flex; align-items: center; height: 32px; padding: 0 0 2px 91px; }
.objects li svg:last-of-type { margin-right: 7px; }

/* scene toolbar */
.scene-bar { display: flex; align-items: center; gap: 6px; height: 52px; background: #3c3c3c; padding: 0 6px 0 12px; flex: none; }
.grip { width: 8px; height: 32px; border: solid #5c5c5c; border-width: 0 2px; margin-right: 6px; flex: none; }
.grip.second { margin-left: 12px; }
.sb { display: flex; align-items: center; justify-content: center; gap: 12px; width: 44px; height: 40px; background: #585858; border-radius: 4px; }
.sb .arrow { margin-top: 2px; }
.wide { width: 76px; padding-right: 2px; }
.mid { width: 64px; }
.thin { width: 28px; }
.blue { background: #46607c !important; }
.blue svg { color: #eee; }
.blue .arrow { color: var(--icon); }
.twod { font-weight: 700; color: var(--icon); font-size: 22px; }
.split { display: flex; gap: 2px; }
.split .sb:first-child { border-radius: 4px 0 0 4px; }
.split .sb:last-child { border-radius: 0 4px 4px 0; }

/* scene viewport */
.viewport { position: relative; flex: 1; min-height: 0; overflow: hidden; }
.world { width: 100%; height: 100%; }
.camera-mark { position: absolute; left: 39.300%; top: 38.800%; }
.sun-mark { position: absolute; left: 49.200%; top: 39.600%; }
.tools { position: absolute; left: 4px; top: 4px; width: 86px; padding: 12px 6px 6px; display: flex; flex-direction: column; gap: 2px; background: linear-gradient(#2a3335, #222829 40%, #151515 55%); border-radius: 6px; }
.hgrip { display: block; width: 32px; height: 8px; border: solid #555; border-width: 2px 0; }
.tools .hgrip { margin: 0 auto 10px; }
.tools button { display: flex; align-items: center; justify-content: center; height: 40px; background: #585858; }
.tools button:first-of-type { border-radius: 6px 6px 0 0; }
.tools button:last-of-type { border-radius: 0 0 6px 6px; }
.orient { position: absolute; right: 0; top: 16px; width: 208px; height: 210px; }
.orient > svg { position: absolute; left: 25px; top: 29px; }
.ax { position: absolute; color: #fff; font-weight: 600; font-size: 20px; line-height: 24px; }
.ay { left: 92px; top: 2px; }
.axx { left: 26px; top: 103px; }
.az { left: 158px; top: 103px; }
.persp { position: absolute; left: 48px; top: 173px; display: flex; align-items: center; gap: 6px; color: #cfcfcf; }

/* project */
.pbtn { display: flex; align-items: center; justify-content: center; width: 52px; height: 40px; border-left: 2px solid #282828; }
.dim svg { color: #8a8a8a; }
.hid { width: 80px; gap: 6px; justify-content: flex-start; padding-left: 10px; }
.browser { flex: 1; display: flex; min-height: 0; }
.tree { width: 416px; border-right: 2px solid #232323; }
.tree li { display: flex; align-items: center; height: 32px; padding-bottom: 2px; }
.tree .ic { margin-right: 6px; }
.tree b { margin-left: 2px; }
.l0 { padding-left: 6px; }
.l1 { padding-left: 34px; }
.l2 { padding-left: 62px; }
.l3 { padding-left: 90px; }
.tree .picked { background: #4d4d4d; margin-top: 30px; }
.content { flex: 1; display: flex; flex-direction: column; background: #333; }
.crumb { height: 42px; line-height: 40px; padding-left: 8px; background: #404040; border-bottom: 2px solid #282828; color: #bdbdbd; }
.assets { flex: 1; display: grid; grid-template-columns: repeat(14, 1fr); grid-auto-rows: 158px; row-gap: 28px; padding: 20px 20px 0 18px; }
.assets li { display: flex; flex-direction: column; align-items: center; gap: 2px; font-size: 20px; line-height: 28px; }
.assets svg { width: 128px; height: 128px; --ua: #dbe4fc; --ub: #c6cde4; --uc: #b2b9ce; }
.assets span { padding: 0 7px; border-radius: 6px; }
.chosen span { background: #4d4d4d; }
.row-end { grid-column: 14; }
.path { display: flex; align-items: center; height: 42px; background: #404040; border-top: 2px solid #282828; padding: 0 32px 0 10px; }
.path span { margin-left: 7px; flex: 1; }
input[type="range"] { appearance: none; width: 110px; height: 4px; background: #5e5e5e; }
input[type="range"]::-webkit-slider-thumb { appearance: none; width: 20px; height: 20px; border-radius: 50%; background: #999; }

/* inspector */
.insp-head { display: flex; height: 110px; background: #3c3c3c; border-bottom: 2px solid #1a1a1a; padding: 15px 10px 0 20px; flex: none; }
.insp-head h1 { flex: 1; margin-left: 24px; margin-top: -5px; font-weight: 400; font-size: 27px; color: #a8a8a8; }
.insp-side { display: flex; flex-direction: column; align-items: flex-end; gap: 18px; margin-top: -1px; }
.insp-side svg { margin-right: 2px; }
.open { width: 86px; height: 36px; background: #585858; border: 2px solid #2c2c2c; border-radius: 6px; color: #eee; }
.labels { height: 44px; line-height: 42px; padding-left: 14px; background: #3c3c3c; border: solid #1f1f1f; border-width: 2px 0; color: #a8a8a8; }
.bundle { height: 98px; padding: 10px 8px 0 8px; background: #3c3c3c; }
.tag { display: flex; align-items: center; justify-content: center; width: 40px; height: 30px; margin-left: auto; border-radius: 15px; background: #2b4a80; }
.fields { display: flex; align-items: center; margin-top: 14px; color: var(--icon); }
.fields label { width: 182px; }
.drop { position: relative; height: 36px; background: #515151; border: 2px solid #303030; border-radius: 6px; color: #e4e4e4; }
.drop select { padding-left: 6px; }
.drop .arrow { position: absolute; right: 10px; top: 10px; }
.grow { flex: 1; }
.variant { width: 133px; margin-left: 12px; }

/* status bar */
.status { display: flex; justify-content: flex-end; height: 44px; padding-right: 1px; }
.status span { display: flex; align-items: center; justify-content: center; width: 53px; margin-top: 4px; border-left: 2px solid #282828; }

/* importer window */
.dialog { position: absolute; right: 112px; bottom: 196px; width: 1280px; height: 519px; color: #c4c4c4; }
.dialog-frame { height: 100%; display: flex; flex-direction: column; background: #383838; border: 2px solid #666; border-radius: 20px; overflow: hidden; box-shadow: 0 0 0 1px #000, 0 36px 80px rgba(0, 0, 0, .7); }
.titlebar { display: grid; grid-template-columns: 1fr auto 1fr; align-items: center; height: 55px; padding: 0 14px 2px; background: #333; color: #a3a3a3; font-size: 26px; flex: none; }
.lights { display: flex; gap: 16px; }
.lights i { width: 24px; height: 24px; border-radius: 50%; }
.red { background: #ed6b5f; }
.amber { background: #f5bf4f; }
.green { background: #62c554; }
.dialog-tabs { display: flex; justify-content: space-between; height: 42px; background: #282828; border-bottom: 2px solid #232323; padding: 4px 26px 0 0; flex: none; }
.dtab { height: 38px; width: 190px; background: #3c3c3c; border-top: 4px solid #3a5f8c; border-radius: 0 6px 0 0; text-align: left; padding-left: 10px; color: var(--text); }
.dialog-tabs svg { margin-top: 3px; }
.dialog-body { padding: 4px; display: flex; flex-direction: column; gap: 4px; }
.box { height: 196px; background: #404040; border: 2px solid #242424; border-radius: 6px; padding: 4px 7px; display: flex; flex-direction: column; }
.box h3 { line-height: 32px; padding-left: 1px; }
.box p { font-size: 23px; line-height: 29px; height: 88px; padding: 3px 1px 0; white-space: nowrap; }
.box button { height: 40px; margin-top: 14px; background: #585858; border: 2px solid #303030; border-radius: 6px; color: #eee; }
.box button:disabled { background: #4a4a4a; border-color: #3d3d3d; color: #8e8e8e; }
.highlight { position: absolute; left: -7px; right: 2px; top: 219px; height: 98px; border: 10px solid #eb4026; border-radius: 26px; }
.note { position: absolute; left: 638px; top: -126px; color: #eb4026; font: bold 48px/56px "Liberation Sans", sans-serif; white-space: nowrap; }
.pointer { position: absolute; left: 539px; top: -71px; }
```
FILE: scene.js
```js
// Ground grid: two families of parallel lines seen in perspective.
const group = document.getElementById("grid");
const horizon = 79;
const right = [2114, horizon];
const left = [-72, horizon];
const origin = [1021, 563];
const step = 0.227;
function project(u, v) {
  const w = 1 + u + v;
  return [
    (origin[0] + u * right[0] + v * left[0]) / w,
    (origin[1] + (u + v) * horizon) / w
  ];
}
function line(a, b, alpha) {
  const el = document.createElementNS("http://www.w3.org/2000/svg", "line");
  el.setAttribute("x1", a[0]);
  el.setAttribute("y1", a[1]);
  el.setAttribute("x2", b[0]);
  el.setAttribute("y2", b[1]);
  el.setAttribute("stroke", "#a5a19d");
  el.setAttribute("stroke-opacity", alpha);
  group.appendChild(el);
}
for (let i = -4; i < 36; i++) {
  const k = i * step;
  const near = -0.9 - k;
  line(project(k, near), project(k, 60), 0.22);
  line(project(near, k), project(60, k), 0.22);
}
```
